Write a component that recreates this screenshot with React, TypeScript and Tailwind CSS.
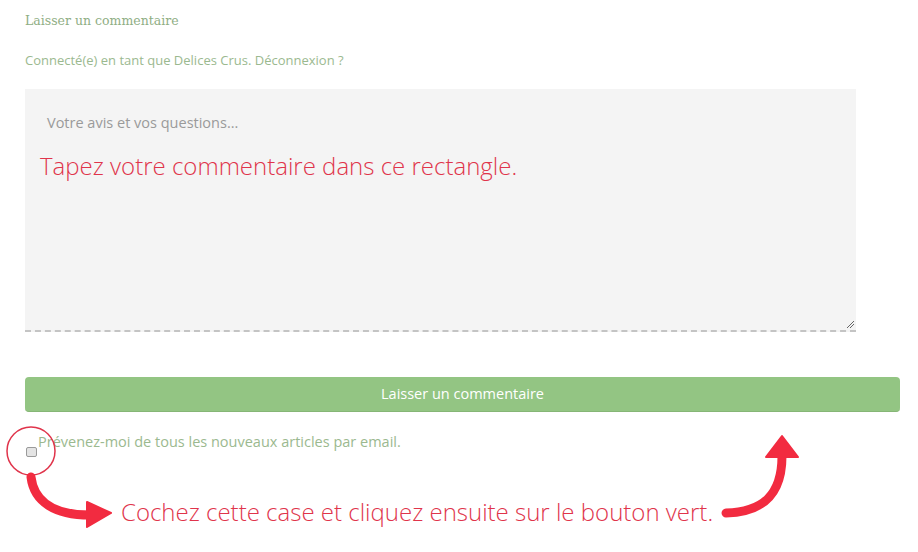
import React from "react";

export default function App() {
  return (
    <div className="relative w-[918px] h-[552px] bg-white overflow-hidden" style={{ fontFamily: '"Open Sans", "Liberation Sans", sans-serif' }}>
      <div className="pl-[25px] pt-[13px]">
        <div className="text-[12.5px] leading-[16px] text-[#8fae84]" style={{ fontFamily: '"DejaVu Serif", "Liberation Serif", serif' }}>
          Laisser un commentaire
        </div>
        <div className="mt-[23px] text-[13px] leading-[16px] text-[#9bb98f]">
          Connecté(e) en tant que Delices Crus. Déconnexion ?
        </div>
        <div className="relative mt-[21px] w-[831px] h-[243px] bg-[#f4f4f4] border-b-2 border-dashed border-[#c4c4c4] pl-[22px] pt-[24px]">
          <div className="text-[14.5px] leading-[20px] text-[#9a9a9a]">Votre avis et vos questions...</div>
          <div className="-ml-[7px] mt-[16px] text-[24px] leading-[34px] font-light text-[#e0344b]">
            Tapez votre commentaire dans ce rectangle.
          </div>
          <svg className="absolute right-[1px] bottom-[1px]" width="9" height="9" viewBox="0 0 9 9">
            <line x1="1" y1="8" x2="8" y2="1" stroke="#666" strokeWidth="1" />
            <line x1="4" y1="8" x2="8" y2="4" stroke="#666" strokeWidth="1" />
          </svg>
        </div>
        <button className="mt-[45px] w-[875px] h-[35px] rounded-[4px] bg-[#93c583] border-b border-[#86b676] text-white text-[14.5px] leading-[20px] flex items-center justify-center">
          Laisser un commentaire
        </button>
        <div className="flex items-start mt-[21px]">
          <div className="mt-[14px] ml-[1px] w-[11px] h-[10px] rounded-[2px] border border-[#9a9a9a] bg-[#e4e4e4]" />
          <div className="ml-[1px] text-[14.5px] leading-[18px] text-[#9bb98f]">
            Prévenez-moi de tous les nouveaux articles par email.
          </div>
        </div>
        <div className="ml-[96px] mt-[39px] text-[24px] leading-[32px] font-light text-[#e0344b]">
          Cochez cette case et cliquez ensuite sur le bouton vert.
        </div>
      </div>
      <svg className="absolute left-0 top-0 pointer-events-none" width="918" height="552" viewBox="0 0 918 552">
        <circle cx="31" cy="451" r="24" fill="none" stroke="#e0344b" strokeWidth="1.5" />
        <path d="M 31 477 C 34 502, 55 515, 90 515" fill="none" stroke="#f22b40" strokeWidth="9" strokeLinecap="round" />
        <polygon points="87,502 111,513 87,527" fill="#f22b40" stroke="#f22b40" strokeWidth="2" strokeLinejoin="round" />
        <path d="M 726 513 C 762 512, 782 496, 782 456" fill="none" stroke="#f22b40" strokeWidth="9" strokeLinecap="round" />
        <polygon points="766,457 782,436 798,457" fill="#f22b40" stroke="#f22b40" strokeWidth="2" strokeLinejoin="round" />
      </svg>
    </div>
  );
}
